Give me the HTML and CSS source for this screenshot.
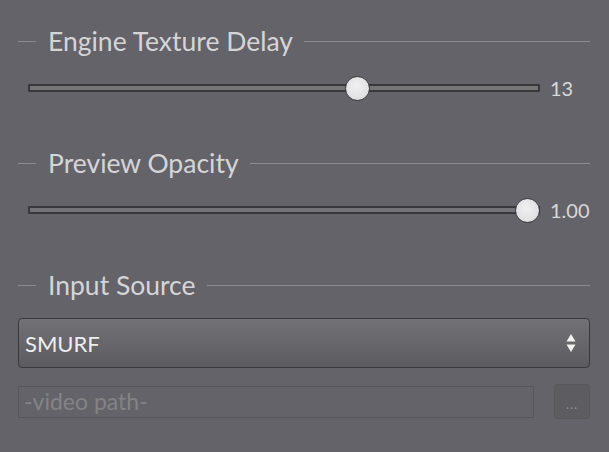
FILE: index.html
```html
<!DOCTYPE html>
<html>
<head>
<meta charset="utf-8">
<link rel="stylesheet" href="styles.css">
</head>
<body>
<div class="panel">
  <div class="group-title"><span class="line short"></span><span class="title-text">Engine Texture Delay</span><span class="line long"></span></div>
  <div class="slider-row">
    <div class="track"><div class="thumb" style="--v:0.65"></div></div>
    <span class="value">13</span>
  </div>

  <div class="group-title gap"><span class="line short"></span><span class="title-text">Preview Opacity</span><span class="line long"></span></div>
  <div class="slider-row">
    <div class="track"><div class="thumb" style="--v:1"></div></div>
    <span class="value">1.00</span>
  </div>

  <div class="group-title gap"><span class="line short"></span><span class="title-text">Input Source</span><span class="line long"></span></div>
  <div class="combo">
    <span class="combo-text">SMURF</span>
    <svg class="combo-arrow" width="10" height="20" viewBox="0 0 10 20">
      <polygon points="5,1 9.5,8.5 0.5,8.5" fill="#f2f2f2"/>
      <polygon points="0.5,11.5 9.5,11.5 5,19" fill="#f2f2f2"/>
    </svg>
  </div>
  <div class="path-row">
    <div class="path-field">-video path-</div>
    <div class="browse-btn">...</div>
  </div>
</div>
</body>
</html>
```

FILE: styles.css
```css
html, body {
  margin: 0;
  padding: 0;
}
body {
  background: #646369;
  font-family: Lato, "Liberation Sans", sans-serif;
  width: 609px;
  height: 452px;
  overflow: hidden;
}
.panel {
  padding: 26px 19px 0 18px;
  display: flex;
  flex-direction: column;
}
.group-title {
  height: 30px;
  display: flex;
  align-items: center;
}
.group-title.gap {
  margin-top: 48px;
}
.line {
  height: 1px;
  background: #8a8a8f;
}
.line.short {
  width: 18px;
}
.line.long {
  flex: 1;
}
.title-text {
  color: #d5d5d8;
  font-size: 26.5px;
  margin: 0 11px 0 12px;
  line-height: 30px;
  white-space: nowrap;
}
.slider-row {
  margin-top: 20px;
  height: 24px;
  display: flex;
  align-items: center;
  padding-left: 10px;
}
.track {
  position: relative;
  width: 512px;
  height: 8px;
  box-sizing: border-box;
  border: 2px solid #38383d;
  background: #737378;
  border-radius: 1px;
}
.thumb {
  position: absolute;
  top: 50%;
  width: 25px;
  height: 25px;
  box-sizing: border-box;
  margin-top: -12.5px;
  left: calc(var(--v) * (100% + 4px - 25px) - 2px);
  border-radius: 50%;
  border: 1.5px solid #3a3a3f;
  background: radial-gradient(circle at 45% 40%, #f0f0f2 0%, #e2e2e5 60%, #cfcfd3 100%);
}
.value {
  margin-left: 10px;
  color: #d8d8da;
  font-size: 20px;
}
.combo {
  margin-top: 18px;
  height: 50px;
  box-sizing: border-box;
  border: 1.5px solid #38383c;
  border-radius: 4px;
  background: linear-gradient(#717176, #5b5b60);
  display: flex;
  align-items: center;
  justify-content: space-between;
  padding: 0 13px 0 6px;
}
.combo-text {
  color: #eeeeef;
  font-size: 22px;
}
.combo-arrow {
  display: block;
}
.path-row {
  margin-top: 16px;
  display: flex;
  align-items: center;
  gap: 20px;
}
.path-field {
  flex: 1;
  height: 32px;
  box-sizing: border-box;
  border: 1.5px solid #57575b;
  color: #838387;
  font-size: 23px;
  line-height: 28px;
  padding-left: 5px;
  white-space: nowrap;
}
.browse-btn {
  width: 36px;
  height: 35px;
  box-sizing: border-box;
  border: 1px solid #58585c;
  border-radius: 3px;
  background: #5c5c61;
  color: #8e8e93;
  font-size: 13px;
  display: flex;
  align-items: flex-end;
  justify-content: center;
  padding-bottom: 6px;
  letter-spacing: 1px;
}
```
